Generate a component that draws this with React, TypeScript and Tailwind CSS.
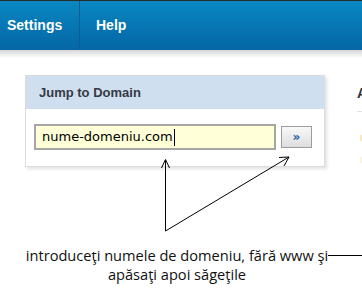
import React from "react";

export default function App() {
  return (
    <div className="relative w-[362px] h-[296px] overflow-hidden bg-white">
      {/* Top navigation bar */}
      <div className="h-[50px] border-t border-[#2b2b2b] bg-gradient-to-b from-[#0a88c2] to-[#0566a5] flex items-stretch font-['Liberation_Sans',Arial,sans-serif] font-bold text-[14px] text-white">
        <div className="w-[80px] border-r border-[#0a5c92] flex items-center pl-[7px]">Settings</div>
        <div className="flex items-center pl-[16px]">Help</div>
      </div>
      <div className="h-[8px] bg-gradient-to-b from-[#d6d6d6] to-white" />

      {/* Content */}
      <div className="flex items-start mt-[17px]">
        <div className="shrink-0 ml-[25px] w-[300px] h-[92px] border border-[#dcdcdc] shadow-[2px_2px_3px_rgba(0,0,0,0.12)] bg-white">
          <div className="h-[33px] bg-[#cfdff0] pl-[13px] flex items-center font-['Liberation_Sans',Arial,sans-serif] font-bold text-[13px] text-[#363a45]">
            Jump to Domain
          </div>
          <div className="flex items-center pl-[8px] pt-[15px] gap-[5px]">
            <div className="w-[242px] h-[26px] border-2 border-[#a6a6a6] bg-[#ffffd8] flex items-center pl-[6px] font-['DejaVu_Sans',Verdana,sans-serif] text-[13px] text-black">
              nume-domeniu.com<span className="inline-block w-px h-[17px] bg-black ml-px" />
            </div>
            <div className="w-[31px] h-[22px] border border-[#9c9c9c] bg-gradient-to-b from-[#f8f8f8] to-[#dedede] flex items-center justify-center font-['DejaVu_Sans',sans-serif] font-bold text-[12px] text-[#1f5fa8] leading-none pb-px">
              »
            </div>
          </div>
        </div>
        <div className="shrink-0 ml-[32px] mt-[11px] flex flex-col">
          <div className="font-['Liberation_Sans',Arial,sans-serif] font-bold text-[14px] text-[#2d3440] whitespace-nowrap leading-none">A</div>
          <div className="mt-[11px] w-[40px] h-px bg-[#e2e2e2]" />
          <div className="mt-[23px] ml-[3px] w-[40px] h-[6px] bg-[#fde9b8]" />
          <div className="mt-[16px] ml-[3px] w-[40px] h-[6px] bg-[#fef3d6]" />
        </div>
      </div>

      {/* Annotation text */}
      <div className="mt-[79px] pr-[8px] text-center font-['Open_Sans','Noto_Sans',sans-serif] font-medium text-[14.6px] leading-[19px] text-[#111]">
        <div>introduceţi numele de domeniu, fără www şi</div>
        <div>apăsaţi apoi săgeţile</div>
      </div>

      {/* Arrows overlay */}
      <svg className="absolute inset-0 pointer-events-none" width="362" height="296" viewBox="0 0 362 296">
        <g stroke="#000" strokeWidth="1" fill="none">
          <line x1="165.5" y1="160" x2="165.5" y2="231" />
          <polyline points="161.5,168 165.5,159.5 169.5,168" />
          <line x1="165.5" y1="231" x2="289" y2="157" />
          <polyline points="279,157.5 289,157 284,166" />
          <line x1="328" y1="255.5" x2="362" y2="255.5" />
        </g>
      </svg>
    </div>
  );
}
